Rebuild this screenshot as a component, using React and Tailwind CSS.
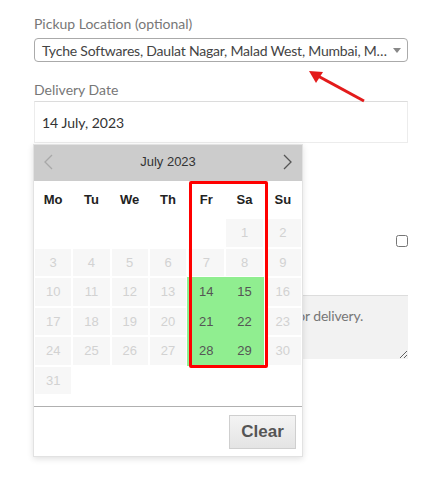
import React from "react";

const rows = [
  [null, null, null, null, null, 1, 2],
  [3, 4, 5, 6, 7, 8, 9],
  [10, 11, 12, 13, 14, 15, 16],
  [17, 18, 19, 20, 21, 22, 23],
  [24, 25, 26, 27, 28, 29, 30],
  [31, null, null, null, null, null, null],
];
const open = [14, 15, 21, 22, 28, 29];
const days = ["Mo", "Tu", "We", "Th", "Fr", "Sa", "Su"];

function Calendar() {
  return (
    <div className="absolute left-[33px] top-[144px] w-[270px] border border-[#e2e2e2] bg-white shadow-[0_2px_6px_rgba(0,0,0,0.12)] font-['Liberation_Sans',Arial,sans-serif]">
      <div className="h-[36px] bg-[#cccccc] flex items-center justify-between px-[9px] pb-[3px]">
        <svg width="10" height="16" viewBox="0 0 10 16">
          <polyline points="9,1 2,8 9,15" fill="none" stroke="#a8a8a8" strokeWidth="1.3" />
        </svg>
        <span className="text-[13px] text-[#333]">July 2023</span>
        <svg width="10" height="16" viewBox="0 0 10 16">
          <polyline points="1,1 8,8 1,15" fill="none" stroke="#555" strokeWidth="1.3" />
        </svg>
      </div>
      <div className="grid grid-cols-7 h-[37px] items-center text-center text-[13px] font-bold text-[#222]">
        {days.map((d) => (
          <span key={d}>{d}</span>
        ))}
      </div>
      {rows.map((r, i) => (
        <div key={i} className="grid grid-cols-7">
          {r.map((n, j) =>
            n === null ? (
              <div key={j} className="h-[29.5px]" />
            ) : open.includes(n) ? (
              <div
                key={j}
                className="h-[29.5px] border border-[#90ee90] bg-[#90ee90] text-[#555] text-[13px] flex items-center justify-center"
              >
                {n}
              </div>
            ) : (
              <div
                key={j}
                className="h-[29.5px] border border-white bg-[#f7f7f7] text-[#d2d2d2] text-[13px] flex items-center justify-center"
              >
                {n}
              </div>
            )
          )}
        </div>
      ))}
      <div className="mt-[11px] border-t border-[#b0b0b0] h-[50px] flex justify-end items-start pt-[8px] pr-[6px]">
        <button className="w-[67px] h-[34px] border border-[#cfcfcf] bg-gradient-to-b from-[#f4f4f4] to-[#e4e4e4] text-[17px] font-bold text-[#555]">
          Clear
        </button>
      </div>
      <div className="absolute left-[155px] top-[36px] w-[79px] h-[187px] border-[3px] border-[#ff0000] rounded-[2px]" />
    </div>
  );
}

export default function App() {
  return (
    <div className="relative w-[436px] h-[481px] bg-white font-['Lato','Noto_Sans',sans-serif] overflow-hidden">
      <div className="pl-[34px] pr-[28px] pt-[13px]">
        <div className="text-[14px] leading-[22px] text-[#777]">Pickup Location (optional)</div>
        <div className="mt-[3px] h-[24px] border border-[#aaa] rounded-[4px] flex items-center justify-between pl-[7px] pr-[6px]">
          <span className="text-[14px] tracking-[-0.2px] text-[#444] whitespace-nowrap">
            Tyche Softwares, Daulat Nagar, Malad West, Mumbai, M…
          </span>
          <svg width="8" height="5" viewBox="0 0 8 5" className="shrink-0">
            <polygon points="0,0 8,0 4,5" fill="#888" />
          </svg>
        </div>
        <div className="mt-[17px] text-[14px] leading-[22px] text-[#777]">Delivery Date</div>
        <div className="h-[42px] border border-[#ececec] border-t-[#dcdcdc] flex items-center pl-[7px] text-[14px] text-[#333]">
          14 July, 2023
        </div>
        <div className="mt-[87px] h-[22px] flex items-center justify-between">
          <span className="text-[14px] text-[#555]">Ship to a different address?</span>
          <input type="checkbox" className="w-[12px] h-[12px]" />
        </div>
        <textarea
          readOnly
          className="mt-[43px] block w-full h-[64px] bg-[#f2f2f2] border-t border-[#ddd] text-[14px] tracking-[-0.15px] text-[#777] placeholder:text-[#777] pl-[8px] pt-[9px] outline-none"
          placeholder="Notes about your order, e.g. special notes for delivery."
        />
      </div>
      <Calendar />
      <svg className="absolute left-0 top-0" width="436" height="481" viewBox="0 0 436 481">
        <line x1="364" y1="101" x2="318" y2="76" stroke="#e31b1b" strokeWidth="3" />
        <polygon points="309,71 323,72 316,83" fill="#e31b1b" />
      </svg>
    </div>
  );
}
